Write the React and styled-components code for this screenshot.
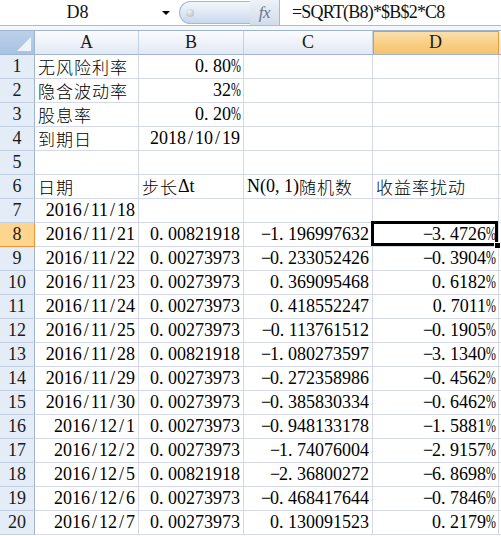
import React from "react";
import styled, { createGlobalStyle, css } from "styled-components";

const GlobalStyle = createGlobalStyle`
  html, body { margin: 0; padding: 0; background: #ffffff; }
  body { overflow: hidden; }
`;

const Frame = styled.div`
  width: 501px;
  height: 536px;
  overflow: hidden;
  background: #ffffff;
  font-family: "Liberation Serif", "Noto Sans CJK SC", serif;
`;

const FormulaBar = styled.div`
  display: flex;
  height: 25px;
  border-bottom: 1px solid #a7bcd6;
  background: #ffffff;
`;

const NameField = styled.div`
  width: 155px;
  display: flex;
  align-items: center;
  justify-content: center;
  font-size: 18px;
  color: #111;
`;

const DropArea = styled.div`
  width: 24px;
  display: flex;
  align-items: center;
  justify-content: center;
`;

const Arrow = styled.div`
  width: 0;
  height: 0;
  border-left: 4px solid transparent;
  border-right: 4px solid transparent;
  border-top: 4px solid #000;
  margin-left: -2px;
`;

const Pill = styled.div`
  width: 71px;
  margin-top: 1px;
  height: 23px;
  box-sizing: border-box;
  border: 1px solid #a3b9d6;
  border-right: none;
  border-radius: 12px 0 0 12px;
  background: linear-gradient(#f3f6fb, #dde7f4 55%, #c9d8ee);
  display: flex;
  align-items: center;
  padding-left: 6px;
`;

const Dot = styled.div`
  width: 8px;
  height: 8px;
  border-radius: 50%;
  background: radial-gradient(circle at 40% 35%, #f2f3f6, #a9b0ba);
`;

const FxButton = styled.div`
  width: 29px;
  border-right: 1px solid #a3b9d6;
  background: linear-gradient(#eef2f8, #d2dcea);
  display: flex;
  align-items: center;
  justify-content: center;
  font-family: "Liberation Serif", serif;
  font-style: italic;
  font-size: 17px;
  color: #6a7788;
  letter-spacing: -0.5px;
`;

const FormulaText = styled.div`
  flex: 1;
  display: flex;
  align-items: center;
  padding-left: 12px;
  font-size: 18px;
  letter-spacing: -0.8px;
  color: #111;
  white-space: nowrap;
`;

const Gap = styled.div`
  height: 4px;
  background: #f4f7fb;
`;

const Grid = styled.div`
  display: grid;
  grid-template-columns: 35px 104px 105px 129px 126px 2px;
  grid-auto-rows: 24px;
  border-top: 1px solid #9fb5cf;
`;

const HeadCell = styled.div`
  box-sizing: border-box;
  display: flex;
  align-items: center;
  justify-content: center;
  font-size: 18px;
  color: #1a1a1a;
  border-bottom: 1px solid #9fb5cf;
  border-right: 1px solid ${(p) => (p.$active ? "#f29536" : "#c3d1e3")};
  background: ${(p) =>
    p.$active
      ? "linear-gradient(#fbe1b0, #f8cd80 60%, #f6c46e)"
      : "linear-gradient(#fbfcfe, #eef2f9 50%, #e2e9f4)"};
  ${(p) =>
    p.$active &&
    css`
      box-shadow: inset 0 1px 0 #f29536, inset 1px 0 0 #f29536;
    `}
`;

const Corner = styled.div`
  box-sizing: border-box;
  border-right: 1px solid #9fb5cf;
  border-bottom: 1px solid #9fb5cf;
  background: linear-gradient(#bcd0ea, #a9c2e3);
  position: relative;
  &::after {
    content: "";
    position: absolute;
    right: 3px;
    bottom: 3px;
    width: 0;
    height: 0;
    border-left: 14px solid transparent;
    border-bottom: 14px solid #eef3fa;
  }
`;

const RowHead = styled.div`
  box-sizing: border-box;
  display: flex;
  align-items: center;
  justify-content: center;
  font-size: 18px;
  color: #1a1a1a;
  border-right: 1px solid ${(p) => (p.$active ? "#f29536" : "#9fb5cf")};
  border-bottom: 1px solid ${(p) => (p.$active ? "#f29536" : "#c3d1e3")};
  background: ${(p) => (p.$active ? "#fdd58e" : "#e4ecf7")};
`;

const Cell = styled.div`
  box-sizing: border-box;
  position: relative;
  display: flex;
  align-items: center;
  justify-content: ${(p) => (p.$right ? "flex-end" : "flex-start")};
  padding: ${(p) => (p.$right ? "0 3px 0 0" : "0 0 0 3px")};
  font-size: 18px;
  color: #000;
  white-space: nowrap;
  border-right: 1px solid #d4d8e9;
  border-bottom: 1px solid #d4d8e9;
  ${(p) =>
    p.$selected &&
    css`
      &::after {
        content: "";
        position: absolute;
        left: -2px;
        top: -2px;
        right: 0;
        bottom: 0;
        border: 3px solid #000;
        box-sizing: border-box;
        z-index: 2;
      }
      &::before {
        content: "";
        position: absolute;
        right: -3px;
        bottom: -3px;
        width: 5px;
        height: 5px;
        background: #000;
        border: 1px solid #fff;
        z-index: 3;
      }
    `}
`;

const EdgeCell = styled.div`
  border-bottom: 1px solid #d4d8e9;
`;

const EdgeHead = styled.div`
  box-sizing: border-box;
  border-bottom: 1px solid #9fb5cf;
  background: linear-gradient(#fbfcfe, #e2e9f4);
`;

const Cjk = styled.span`
  font-family: "Noto Sans CJK SC", sans-serif;
  font-weight: 300;
  font-size: 17px;
  letter-spacing: 1px;
`;

const Glyph = styled.span`
  display: inline-block;
  width: 9px;
  text-align: ${(p) => p.$align || "center"};
`;

const Squeezed = styled.span`
  display: inline-block;
  transform: scaleX(0.66);
  transform-origin: left center;
`;

function NumText({ text }) {
  return Array.from(text).map((ch, i) => {
    if (ch === "." || ch === ",")
      return (
        <Glyph key={i} $align="left">
          {ch}
        </Glyph>
      );
    if (ch === "/" || ch === "−")
      return <Glyph key={i}>{ch}</Glyph>;
    if (ch === "%")
      return (
        <Glyph key={i} $align="left">
          <Squeezed>{ch}</Squeezed>
        </Glyph>
      );
    return ch;
  });
}

const cols = ["A", "B", "C", "D"];

const rows = [
  [{ t: "无风险利率", cjk: true }, { t: "0.80%", r: true }, null, null],
  [{ t: "隐含波动率", cjk: true }, { t: "32%", r: true }, null, null],
  [{ t: "股息率", cjk: true }, { t: "0.20%", r: true }, null, null],
  [{ t: "到期日", cjk: true }, { t: "2018/10/19", r: true }, null, null],
  [null, null, null, null],
  [
    { parts: [["日期", true]] },
    { parts: [["步长", true], ["Δt", false]] },
    { parts: [["N(0,1)", false], ["随机数", true]] },
    { parts: [["收益率扰动", true]] },
  ],
  [{ t: "2016/11/18", r: true }, null, null, null],
];

const data = [
  ["2016/11/21", "0.00821918", "−1.196997632", "−3.4726%"],
  ["2016/11/22", "0.00273973", "−0.233052426", "−0.3904%"],
  ["2016/11/23", "0.00273973", "0.369095468", "0.6182%"],
  ["2016/11/24", "0.00273973", "0.418552247", "0.7011%"],
  ["2016/11/25", "0.00273973", "−0.113761512", "−0.1905%"],
  ["2016/11/28", "0.00821918", "−1.080273597", "−3.1340%"],
  ["2016/11/29", "0.00273973", "−0.272358986", "−0.4562%"],
  ["2016/11/30", "0.00273973", "−0.385830334", "−0.6462%"],
  ["2016/12/1", "0.00273973", "−0.948133178", "−1.5881%"],
  ["2016/12/2", "0.00273973", "−1.74076004", "−2.9157%"],
  ["2016/12/5", "0.00821918", "−2.36800272", "−6.8698%"],
  ["2016/12/6", "0.00273973", "−0.468417644", "−0.7846%"],
  ["2016/12/7", "0.00273973", "0.130091523", "0.2179%"],
];

const allRows = [
  ...rows,
  ...data.map((r) => r.map((t) => ({ t, r: true }))),
];

function CellContent({ c }) {
  if (!c) return null;
  if (c.parts)
    return c.parts.map(([txt, isCjk], i) =>
      isCjk ? (
        <Cjk key={i}>{txt}</Cjk>
      ) : (
        <span key={i}>
          <NumText text={txt} />
        </span>
      )
    );
  return c.cjk ? <Cjk>{c.t}</Cjk> : <NumText text={c.t} />;
}

export default function App() {
  return (
    <>
      <GlobalStyle />
      <Frame>
        <FormulaBar>
          <NameField>D8</NameField>
          <DropArea>
            <Arrow />
          </DropArea>
          <Pill>
            <Dot />
          </Pill>
          <FxButton>fx</FxButton>
          <FormulaText>=SQRT(B8)*$B$2*C8</FormulaText>
        </FormulaBar>
        <Gap />
        <Grid>
          <Corner />
          {cols.map((c) => (
            <HeadCell key={c} $active={c === "D"}>
              {c}
            </HeadCell>
          ))}
          <EdgeHead />
          {allRows.map((row, ri) => {
            const n = ri + 1;
            return (
              <React.Fragment key={n}>
                <RowHead $active={n === 8}>{n}</RowHead>
                {row.map((c, ci) => (
                  <Cell
                    key={ci}
                    $right={c && c.r}
                    $selected={n === 8 && ci === 3}
                  >
                    <CellContent c={c} />
                  </Cell>
                ))}
                <EdgeCell />
              </React.Fragment>
            );
          })}
        </Grid>
      </Frame>
    </>
  );
}
